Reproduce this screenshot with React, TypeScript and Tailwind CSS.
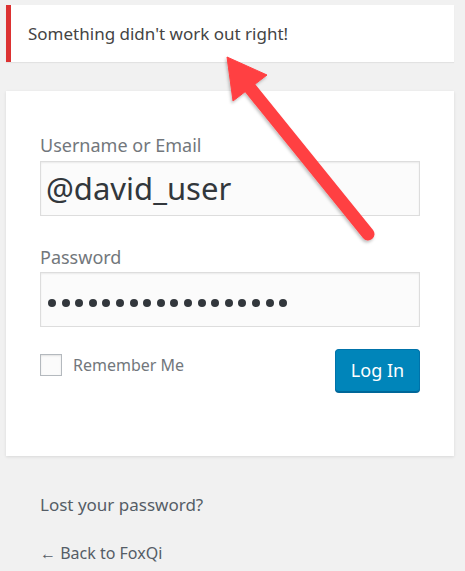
import { useState } from 'react';

const font = { fontFamily: '"Noto Sans", "Open Sans", Arial, sans-serif' };

export default function App() {
  const [remember, setRemember] = useState(false);

  return (
    <div className="relative min-h-screen bg-[#f1f1f1] px-[6px] pt-[5px] pr-[11px]" style={font}>
      {/* Error notice */}
      <div className="flex h-[57px] items-center border-l-[5px] border-[#dc3232] bg-white pl-[17px] shadow-[0_1px_1px_rgba(0,0,0,0.06)]">
        <p className="text-[17px] text-[#444]">Something didn't work out right!</p>
      </div>

      {/* Login form */}
      <div className="mt-[29px] h-[365px] bg-white px-[34px] pt-[42px] shadow-[0_1px_3px_rgba(0,0,0,0.1)]">
        <label className="block text-[18px] leading-[24px] text-[#72777c]">Username or Email</label>
        <div className="mt-[4px] flex h-[55px] w-[380px] items-center border border-[#ddd] bg-[#fbfbfb] px-[5px] text-[31px] text-[#32373c] shadow-[inset_0_1px_2px_rgba(0,0,0,0.07)]">
          @david_user
        </div>

        <label className="mt-[29px] block text-[18px] leading-[24px] text-[#72777c]">Password</label>
        <div className="mt-[3px] flex h-[55px] w-[380px] items-center gap-[5.6px] border border-[#ddd] bg-[#fbfbfb] px-[7px] pt-[6px] shadow-[inset_0_1px_2px_rgba(0,0,0,0.07)]">
          {Array.from({ length: 18 }).map((_, i) => (
            <span key={i} className="h-[8px] w-[8px] rounded-full bg-[#32373c]" />
          ))}
        </div>

        <div className="mt-[22px] flex w-[380px] items-start justify-between">
          <label className="mt-[4px] flex items-center gap-[11px] text-[16px] text-[#72777c]">
            <button
              onClick={() => setRemember(!remember)}
              className="h-[22px] w-[22px] border border-[#b4b9be] bg-[#fbfbfb] shadow-[inset_0_1px_2px_rgba(0,0,0,0.1)]"
            />
            Remember Me
          </label>
          <button className="h-[43px] w-[85px] rounded-[4px] border border-[#0073aa] border-b-[#006799] bg-[#0085ba] text-[18px] text-white shadow-[0_1px_0_#006799]">
            Log In
          </button>
        </div>
      </div>

      {/* Links */}
      <div className="px-[34px]">
        <p className="mt-[37px] text-[17px] leading-[24px] text-[#555d66]">Lost your password?</p>
        <p className="mt-[24px] text-[16px] leading-[24px] text-[#555d66]">← Back to FoxQi</p>
      </div>

      {/* Annotation arrow */}
      <svg className="pointer-events-none absolute left-0 top-0" width="465" height="571" viewBox="0 0 465 571">
        <defs>
          <filter id="sh" x="-20%" y="-20%" width="140%" height="140%">
            <feDropShadow dx="-1" dy="2" stdDeviation="1.5" floodColor="#000" floodOpacity="0.25" />
          </filter>
        </defs>
        <g filter="url(#sh)" fill="#ff4043" stroke="#ff4043">
          <line x1="368" y1="234" x2="250" y2="88" strokeWidth="13" strokeLinecap="round" />
          <polygon points="227,57 233,101 267,75" strokeWidth="1" strokeLinejoin="round" />
        </g>
      </svg>
    </div>
  );
}
